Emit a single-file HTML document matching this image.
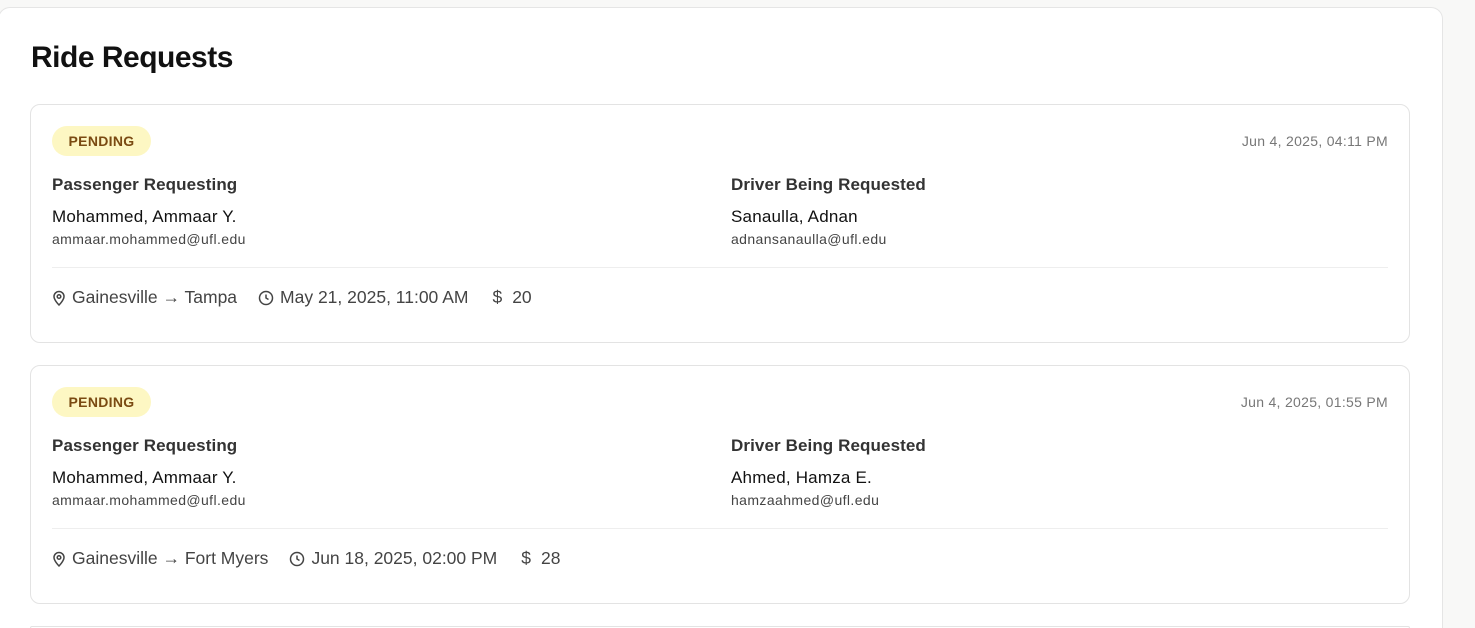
<!DOCTYPE html>
<html><head><meta charset="utf-8"><style>
*{box-sizing:border-box;margin:0;padding:0}
html{width:1475px;height:628px;overflow:hidden}
body{width:1475px;height:628px;overflow:hidden;position:relative;background:#f8f8f7;font-family:"Liberation Sans",sans-serif;color:#111}
.panel{position:absolute;left:-2px;top:7px;width:1445px;height:621px;background:#fff;border:1px solid #e5e5e5;border-bottom:none;border-radius:12px 12px 0 0}
h1{position:absolute;left:31px;top:41px;font-size:30px;font-weight:bold;letter-spacing:-0.5px;color:#111}
.card{position:absolute;left:30px;width:1380px;height:239px;border:1px solid #e3e3e3;border-radius:10px;background:#fff}
.badge{position:absolute;left:21px;top:21px;width:99px;height:30px;border-radius:15px;background:#fdf7c3;color:#7a4a12;font-size:14px;font-weight:bold;text-align:center;line-height:30px;letter-spacing:.3px}
.date{position:absolute;right:21px;top:28px;font-size:14px;color:#777;letter-spacing:.3px}
.col{position:absolute;top:70px}
.lbl{font-size:17px;font-weight:bold;color:#333;letter-spacing:.1px}
.nm{font-size:17px;margin-top:12px;color:#111;letter-spacing:.2px}
.em{font-size:14px;color:#444;margin-top:4px;letter-spacing:.4px}
.hr{position:absolute;left:21px;right:21px;top:162px;border-top:1px solid #eee}
.meta{position:absolute;left:21px;top:182px;font-size:17.5px;color:#444;display:flex;align-items:center;white-space:nowrap}
.meta svg{margin-right:6px}
.gap{width:21px}
</style></head><body>
<div class="panel"></div>
<h1>Ride Requests</h1>

<div class="card" style="top:104px">
<div class="badge">PENDING</div>
<div class="date">Jun 4, 2025, 04:11 PM</div>
<div class="col" style="left:21px"><div class="lbl">Passenger Requesting</div><div class="nm">Mohammed, Ammaar Y.</div><div class="em">ammaar.mohammed@ufl.edu</div></div>
<div class="col" style="left:700px"><div class="lbl">Driver Being Requested</div><div class="nm">Sanaulla, Adnan</div><div class="em">adnansanaulla@ufl.edu</div></div>
<div class="hr"></div>
<div class="meta">
<svg width="14" height="16" viewBox="0 0 14 16" fill="none" stroke="#444" stroke-width="1.5"><path d="M7 15s5-5 5-8.5A5 5 0 0 0 2 6.5C2 10 7 15 7 15z"/><circle cx="7" cy="6.5" r="1.8"/></svg>Gainesville → Tampa<span class="gap"></span>
<svg width="16" height="16" viewBox="0 0 16 16" fill="none" stroke="#444" stroke-width="1.5"><circle cx="8" cy="8" r="6.5"/><path d="M8 4.5V8l2.5 1.5"/></svg>May 21, 2025, 11:00 AM<span class="gap" style="width:24px"></span>
<span style="margin-right:10px">$</span>20
</div>
</div>

<div class="card" style="top:365px">
<div class="badge">PENDING</div>
<div class="date">Jun 4, 2025, 01:55 PM</div>
<div class="col" style="left:21px"><div class="lbl">Passenger Requesting</div><div class="nm">Mohammed, Ammaar Y.</div><div class="em">ammaar.mohammed@ufl.edu</div></div>
<div class="col" style="left:700px"><div class="lbl">Driver Being Requested</div><div class="nm">Ahmed, Hamza E.</div><div class="em">hamzaahmed@ufl.edu</div></div>
<div class="hr"></div>
<div class="meta">
<svg width="14" height="16" viewBox="0 0 14 16" fill="none" stroke="#444" stroke-width="1.5"><path d="M7 15s5-5 5-8.5A5 5 0 0 0 2 6.5C2 10 7 15 7 15z"/><circle cx="7" cy="6.5" r="1.8"/></svg>Gainesville → Fort Myers<span class="gap"></span>
<svg width="16" height="16" viewBox="0 0 16 16" fill="none" stroke="#444" stroke-width="1.5"><circle cx="8" cy="8" r="6.5"/><path d="M8 4.5V8l2.5 1.5"/></svg>Jun 18, 2025, 02:00 PM<span class="gap" style="width:24px"></span>
<span style="margin-right:10px">$</span>28
</div>
</div>

<div class="card" style="top:626px;height:2px;border-bottom:none;border-radius:10px 10px 0 0"></div>
</body></html>
